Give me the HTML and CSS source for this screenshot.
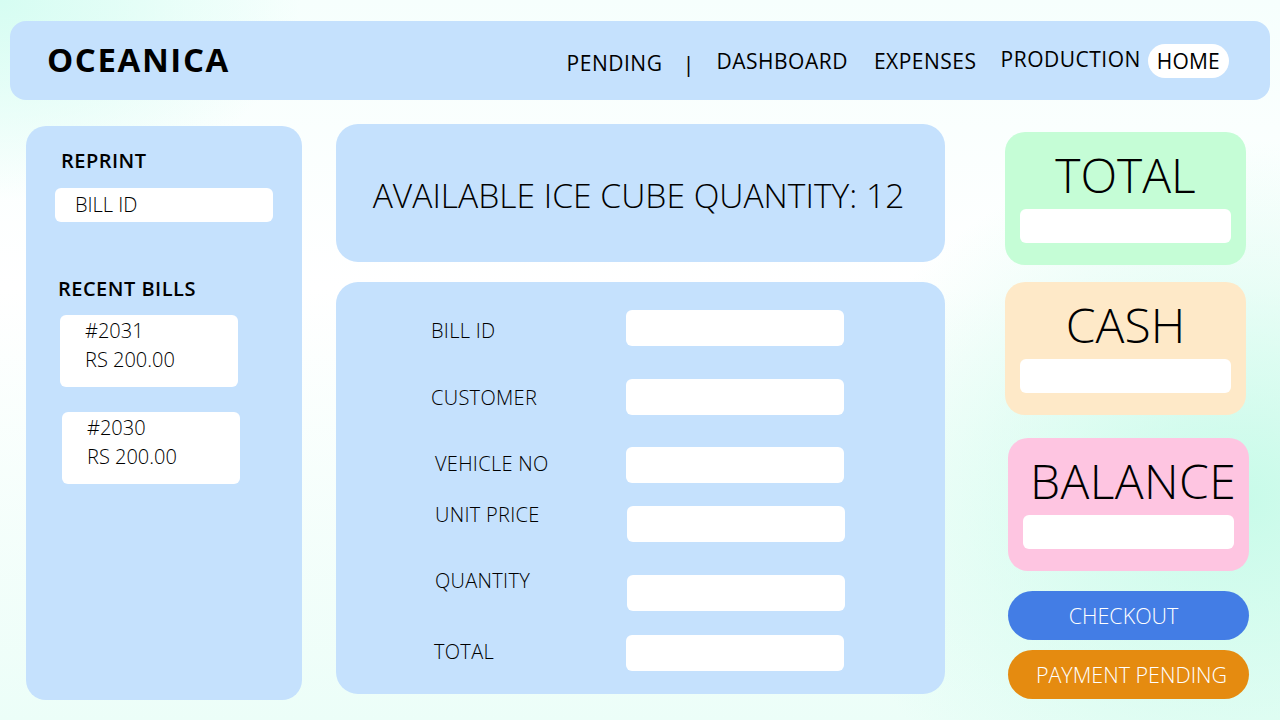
FILE: index.html
```html
<!DOCTYPE html>
<html>
<head>
<meta charset="utf-8">
<link rel="stylesheet" href="styles.css">
</head>
<body>
<header class="topbar">
  <div class="brand">OCEANICA</div>
  <nav class="nav">
    <span class="nav-item pending">PENDING</span>
    <span class="nav-sep">|</span>
    <span class="nav-item after-sep">DASHBOARD</span>
    <span class="nav-item">EXPENSES</span>
    <span class="nav-item production">PRODUCTION</span>
    <span class="nav-item home">HOME</span>
  </nav>
</header>
<main class="layout">
  <aside class="sidebar">
    <h2 class="side-title">REPRINT</h2>
    <div class="side-input">BILL ID</div>
    <h2 class="side-title recent">RECENT BILLS</h2>
    <div class="bill-card">
      <div>#2031</div>
      <div>RS 200.00</div>
    </div>
    <div class="bill-card second">
      <div>#2030</div>
      <div>RS 200.00</div>
    </div>
  </aside>
  <section class="center">
    <div class="stock">AVAILABLE ICE CUBE QUANTITY: 12</div>
    <div class="form">
      <div class="row r1"><span class="label">BILL ID</span><span class="field"></span></div>
      <div class="row r2"><span class="label">CUSTOMER</span><span class="field"></span></div>
      <div class="row r3"><span class="label shift">VEHICLE NO</span><span class="field"></span></div>
      <div class="row r4"><span class="label shift up">UNIT PRICE</span><span class="field nudge"></span></div>
      <div class="row r5"><span class="label shift up">QUANTITY</span><span class="field nudge"></span></div>
      <div class="row r6"><span class="label shift2">TOTAL</span><span class="field"></span></div>
    </div>
  </section>
  <section class="summary">
    <div class="card green">
      <div class="card-title">TOTAL</div>
      <div class="card-field"></div>
    </div>
    <div class="card orange">
      <div class="card-title">CASH</div>
      <div class="card-field"></div>
    </div>
    <div class="card pink">
      <div class="card-title left">BALANCE</div>
      <div class="card-field"></div>
    </div>
    <button class="btn checkout">CHECKOUT</button>
    <button class="btn pay">PAYMENT PENDING</button>
  </section>
</main>
</body>
</html>
```
FILE: styles.css
```css
* { box-sizing: border-box; }
html, body { margin: 0; padding: 0; }
body {
  width: 1280px;
  height: 720px;
  overflow: hidden;
  font-family: "Open Sans", "Noto Sans", sans-serif;
  color: #000;
  background:
    radial-gradient(ellipse 420px 360px at 1240px 500px, #c8fbe9 0%, rgba(210,252,240,0) 100%),
    radial-gradient(ellipse 300px 200px at 0px 0px, #d6fdf2 0%, rgba(214,253,242,0) 100%),
    linear-gradient(180deg, #f6fffd 0%, #ffffff 40%, #ecfef8 100%);
}

.topbar {
  margin: 21px 10px 0 10px;
  height: 79px;
  background: #c5e1fd;
  border-radius: 16px;
  display: flex;
  align-items: center;
  padding: 0 0 0 37px;
}
.brand {
  font-weight: 700;
  font-size: 33px;
  letter-spacing: 1.6px;
  margin-top: -3px;
}
.nav {
  margin-left: auto;
  display: flex;
  align-items: center;
  margin-right: 41px;
}
.nav-item {
  font-size: 21px;
  font-weight: 400;
  letter-spacing: 0.5px;
  margin-left: 26px;
}
.nav-item.pending { margin-left: 0; margin-top: 5px; }
.nav-sep { font-size: 22px; margin-left: 20px; margin-top: 4px; }
.nav-item.after-sep { margin-left: 22px; }
.nav-item.production { margin-top: -4px; margin-left: 24px; }
.nav-item.home {
  margin-left: 7px;
  background: #fff;
  border-radius: 17px;
  padding: 4px 9px;
  height: 34px;
  line-height: 26px;
  letter-spacing: 0.2px;
}

.layout {
  display: flex;
  align-items: flex-start;
  padding: 0 0 0 26px;
}

.sidebar {
  margin-top: 26px;
  width: 276px;
  height: 574px;
  background: #c5e1fd;
  border-radius: 20px;
  padding: 22px 0 0 29px;
}
.side-title {
  margin: 0 0 0 6px;
  font-size: 20px;
  font-weight: 600;
  letter-spacing: 0.5px;
  line-height: 26px;
}
.side-title.recent { margin: 54px 0 0 3px; }
.side-input {
  margin: 14px 0 0 0;
  width: 218px;
  height: 34px;
  background: #fff;
  border-radius: 6px;
  font-size: 20px;
  font-weight: 300;
  padding-left: 20px;
  line-height: 34px;
}
.bill-card {
  margin: 13px 0 0 5px;
  width: 178px;
  height: 72px;
  background: #fff;
  border-radius: 6px;
  font-size: 20px;
  font-weight: 300;
  padding: 1px 0 0 25px;
  line-height: 29px;
}
.bill-card.second { margin: 25px 0 0 7px; }

.center {
  margin-left: 34px;
  margin-top: 24px;
  width: 609px;
}
.stock {
  height: 138px;
  background: #c5e1fd;
  border-radius: 22px;
  display: flex;
  align-items: center;
  justify-content: center;
  font-size: 33.6px;
  font-weight: 300;
  padding-top: 3px;
  padding-right: 4px;
}
.form {
  margin-top: 20px;
  height: 412px;
  background: #c5e1fd;
  border-radius: 22px;
  padding: 28px 0 0 0;
}
.row {
  display: flex;
  align-items: center;
  height: 36px;
}
.label {
  width: 290px;
  padding-left: 95px;
  padding-top: 4px;
  font-size: 20px;
  font-weight: 300;
  letter-spacing: 0.3px;
}
.r2 .label { padding-top: 0; }
.label.shift { padding-left: 99px; padding-top: 0; margin-top: -4px; }
.label.shift2 { padding-left: 98px; padding-top: 0; margin-top: -4px; }
.label.up { margin-top: -20px; }
.r5 .label.up { margin-top: -26px; }
.field {
  width: 218px;
  height: 36px;
  background: #fff;
  border-radius: 6px;
}
.field.nudge { margin-left: 1px; }
.r2 { margin-top: 33px; }
.r3 { margin-top: 32px; }
.r4 { margin-top: 23px; }
.r5 { margin-top: 33px; }
.r6 { margin-top: 24px; }

.summary {
  margin-left: 60px;
  margin-top: 32px;
  width: 244px;
  display: flex;
  flex-direction: column;
}
.card {
  width: 241px;
  height: 133px;
  border-radius: 20px;
  padding: 15px 15px 0 15px;
}
.card.green { background: #c5fdd6; }
.card.orange { background: #fee9c8; margin-top: 17px; }
.card.pink { background: #fec5e1; margin-top: 23px; margin-left: 3px; }
.card-title {
  font-size: 48px;
  font-weight: 300;
  text-align: center;
  line-height: 56px;
  height: 62px;
}
.card-title.left { text-align: left; padding-left: 7px; margin-right: -20px; letter-spacing: 0.4px; }
.card-field {
  width: 211px;
  height: 34px;
  background: #fff;
  border-radius: 6px;
}
.btn {
  border: none;
  width: 241px;
  height: 49px;
  border-radius: 25px;
  color: #fff;
  font-family: "Open Sans", "Noto Sans", sans-serif;
  font-size: 21.5px;
  font-weight: 300;
  margin-left: 3px;
  padding: 0;
}
.btn.checkout { background: #437de5; margin-top: 20px; padding-right: 10px; }
.btn.pay { background: #e58b10; margin-top: 10px; padding-left: 6px; }
```
